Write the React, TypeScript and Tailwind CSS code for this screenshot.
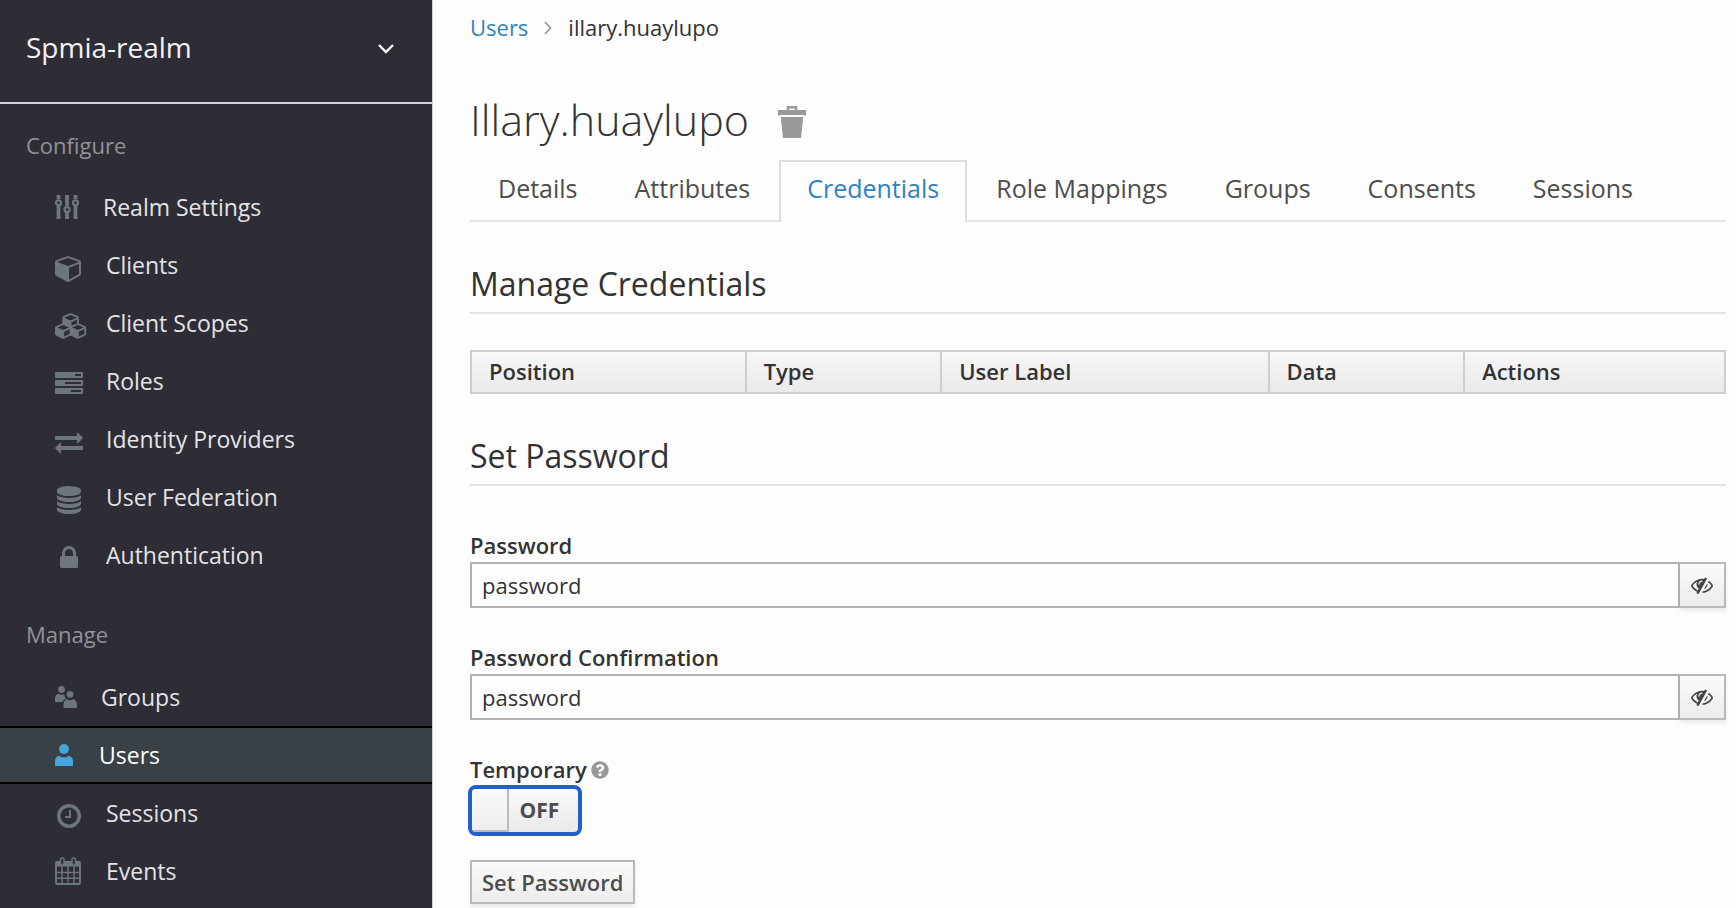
import { useState } from "react";
import type { ReactNode } from "react";
import { FaQuestionCircle } from "react-icons/fa";

const paths = {
  cube: "M896 1629l640-349v-636l-640 233v752zm-64-865l698-254-698-254-698 254zm832-252v768q0 35-18 65t-49 47l-704 384q-28 16-61 16t-61-16l-704-384q-31-17-49-47t-18-65v-768q0-40 23-73t61-47l704-256q22-8 44-8t44 8l704 256q38 14 61 47t23 73z",
  cubes:
    "M640 1632l384-192v-314l-384 164v342zm-64-454l404-173-404-173-404 173zm1088 454l384-192v-314l-384 164v342zm-64-454l404-173-404-173-404 173zm-448-293l384-165v-266l-384 164v267zm-64-379l441-189-441-189-441 189zm1088 518v416q0 36-19 67t-52 47l-448 224q-25 14-57 14t-57-14l-448-224q-4-2-7-4-2 2-7 4l-448 224q-25 14-57 14t-57-14l-448-224q-33-16-52-47t-19-67v-416q0-38 21.5-70t56.5-48l434-186v-400q0-38 21.5-70t56.5-48l448-192q23-10 50-10t50 10l448 192q35 16 56.5 48t21.5 70v400l434 186q36 16 57 48t21 70z",
  tasks:
    "M1024 1408h640v-128h-640v128zm-384-512h1024v-128h-1024v128zm640-512h384v-128h-384v128zm512 832v256q0 26-19 45t-45 19h-1664q-26 0-45-19t-19-45v-256q0-26 19-45t45-19h1664q26 0 45 19t19 45zm0-512v256q0 26-19 45t-45 19h-1664q-26 0-45-19t-19-45v-256q0-26 19-45t45-19h1664q26 0 45 19t19 45zm0-512v256q0 26-19 45t-45 19h-1664q-26 0-45-19t-19-45v-256q0-26 19-45t45-19h1664q26 0 45 19t19 45z",
  exchange:
    "M1792 1184v192q0 13-9.5 22.5t-22.5 9.5h-1376v192q0 13-9.5 22.5t-22.5 9.5q-12 0-24-10l-319-320q-9-9-9-22 0-14 9-23l320-320q9-9 23-9 13 0 22.5 9.5t9.5 22.5v192h1376q13 0 22.5 9.5t9.5 22.5zm0-544q0 14-9 23l-320 320q-9 9-23 9-13 0-22.5-9.5t-9.5-22.5v-192h-1376q-13 0-22.5-9.5t-9.5-22.5v-192q0-13 9.5-22.5t22.5-9.5h1376v-192q0-14 9-23t23-9q12 0 24 10l319 319q9 9 9 23z",
  database:
    "M896 768q237 0 443-43t325-127v170q0 69-103 128t-280 93.5-385 34.5-385-34.5-280-93.5-103-128v-170q119 84 325 127t443 43zm0 768q237 0 443-43t325-127v170q0 69-103 128t-280 93.5-385 34.5-385-34.5-280-93.5-103-128v-170q119 84 325 127t443 43zm0-384q237 0 443-43t325-127v170q0 69-103 128t-280 93.5-385 34.5-385-34.5-280-93.5-103-128v-170q119 84 325 127t443 43zm0-1152q208 0 385 34.5t280 93.5 103 128v128q0 69-103 128t-280 93.5-385 34.5-385-34.5-280-93.5-103-128v-128q0-69 103-128t280-93.5 385-34.5z",
  lock: "M640 768h512v-192q0-106-75-181t-181-75-181 75-75 181v192zm832 96v576q0 40-28 68t-68 28h-960q-40 0-68-28t-28-68v-576q0-40 28-68t68-28h32v-192q0-184 132-316t316-132 316 132 132 316v192h32q40 0 68 28t28 68z",
  clock:
    "M1024 544v448q0 14-9 23t-23 9h-320q-14 0-23-9t-9-23v-64q0-14 9-23t23-9h224v-352q0-14 9-23t23-9h64q14 0 23 9t9 23zm416 352q0-148-73-273t-198-198-273-73-273 73-198 198-73 273 73 273 198 198 273 73 273-73 198-198 73-273zm224 0q0 209-103 385.5t-279.5 279.5-385.5 103-385.5-103-279.5-279.5-103-385.5 103-385.5 279.5-279.5 385.5-103 385.5 103 279.5 279.5 103 385.5z",
  eyeSlash:
    "M555 1335l78-141q-87-63-136-159t-49-203q0-121 61-225-229 117-381 353 167 258 427 375zm389-759q0-20-14-34t-34-14q-125 0-214.5 89.5t-89.5 214.5q0 20 14 34t34 14 34-14 14-34q0-86 61-147t147-61q20 0 34-14t14-34zm363-191q0 7-1 9-106 189-316 567t-315 566l-49 89q-10 16-28 16-12 0-134-70-16-10-16-28 0-12 44-87-143-65-263.5-173t-208.5-245q-20-31-20-69t20-69q153-235 380-371t496-136q89 0 180 17l54-97q10-16 28-16 5 0 18 6t31 15.5 33 18.5 31.5 18.5 19.5 11.5q16 10 16 27zm37 447q0 139-79 253.5t-209 164.5l280-502q8 45 8 84zm448 128q0 35-20 69-39 64-109 145-150 172-347.5 267t-419.5 95l74-132q212-18 392.5-137t301.5-307q-115-179-282-294l63-112q95 64 182.5 153t144.5 184q20 34 20 69z",
};

function Glyph({ d, box = "0 0 1792 1792", className }: { d: string; box?: string; className: string }) {
  return (
    <svg viewBox={box} fill="currentColor" aria-hidden="true" className={className}>
      <path d={d} />
    </svg>
  );
}

function SlidersIcon() {
  return (
    <svg viewBox="0 0 24 24" fill="none" stroke="currentColor" aria-hidden="true" className="size-6">
      <g strokeWidth="3.8">
        <path d="M3.5 0v4M3.5 11v13M12 0v11M12 18v6M20.5 0v4M20.5 11v13" />
      </g>
      <g strokeWidth="2.2">
        <circle cx="3.5" cy="7.8" r="2.5" />
        <circle cx="12" cy="14.6" r="2.5" />
        <circle cx="20.5" cy="7.8" r="2.5" />
      </g>
    </svg>
  );
}

function CalendarIcon() {
  return (
    <svg viewBox="0 0 26 28" fill="none" stroke="currentColor" aria-hidden="true" className="h-7 w-[26px]">
      <rect x="1" y="5" width="24" height="22" rx="1" strokeWidth="2" />
      <path d="M1 7h24" strokeWidth="5" />
      <path d="M1 15.5h24M1 21.2h24M7 9v18M13 9v18M19 9v18" strokeWidth="1.4" />
      <rect x="5.5" y="1" width="3.5" height="7" rx="1.2" strokeWidth="1.4" fill="#2e2d35" />
      <rect x="17" y="1" width="3.5" height="7" rx="1.2" strokeWidth="1.4" fill="#2e2d35" />
    </svg>
  );
}

function UserIcon() {
  return (
    <svg viewBox="0 0 18 22" fill="currentColor" aria-hidden="true" className="h-[22px] w-[18px]">
      <circle cx="9" cy="5" r="5" />
      <path d="M0 22v-4.500C0 14.500 1.500 12.200 4 11.800c3 2 7 2 10 0 2.500.4 4 2.700 4 5.700V22z" />
    </svg>
  );
}

function GroupIcon() {
  return (
    <svg viewBox="0 0 22 22" fill="currentColor" aria-hidden="true" className="size-[22px]">
      <circle cx="6.500" cy="3.500" r="3.400" />
      <circle cx="15" cy="8.300" r="3.400" />
      <path d="M0 16v-3.200C0 10 1.500 8 3.500 7.800c1.800 1.200 3.800 1.300 5.600.4.400 2.300 1 3.600 2.200 4.600C9 13.500 8 14.500 7.400 16z" />
      <path d="M8.500 22v-3c0-3.500 1.500-5.500 3.400-5.800 2 1.400 4.300 1.400 6.200 0 2.200.3 3.900 2.300 3.900 5.800v3z" />
    </svg>
  );
}

function TrashIcon() {
  return (
    <svg viewBox="0 0 28 32" aria-hidden="true" className="h-8 w-7">
      <path d="M10 5V1.200h8V5" fill="none" stroke="#999" strokeWidth="2.400" />
      <path d="M0 4h28v5.500h-2V9H2v.5H0z" fill="#999" />
      <path d="M2.800 11h22.400L23 32H5z" fill="#999" />
    </svg>
  );
}

type Item = { label: string; icon: ReactNode; gap: string; active?: boolean };

const configure: Item[] = [
  { label: "Realm Settings", icon: <SlidersIcon />, gap: "gap-6" },
  { label: "Clients", icon: <Glyph d={paths.cube} box="0 0 1664 1792" className="mt-1.5 h-7 w-[26px]" />, gap: "gap-[25px]" },
  { label: "Client Scopes", icon: <Glyph d={paths.cubes} box="0 0 2304 1792" className="mt-1.5 -mr-[5px] h-7 w-[33px]" />, gap: "gap-[23px]" },
  { label: "Roles", icon: <Glyph d={paths.tasks} className="mt-1.5 size-7" />, gap: "gap-[23px]" },
  { label: "Identity Providers", icon: <Glyph d={paths.exchange} className="mt-1.5 size-7" />, gap: "gap-[23px]" },
  { label: "User Federation", icon: <Glyph d={paths.database} className="mt-1.5 size-7" />, gap: "gap-[23px]" },
  { label: "Authentication", icon: <Glyph d={paths.lock} className="mt-1.5 size-7" />, gap: "gap-[23px]" },
];

const manage: Item[] = [
  { label: "Groups", icon: <GroupIcon />, gap: "gap-6" },
  { label: "Users", icon: <UserIcon />, gap: "gap-[26px]", active: true },
  { label: "Sessions", icon: <Glyph d={paths.clock} className="mt-1.5 size-7" />, gap: "gap-[23px]" },
  { label: "Events", icon: <CalendarIcon />, gap: "gap-[25px]" },
];

function NavList({ items }: { items: Item[] }) {
  return (
    <ul>
      {items.map((item) => (
        <li key={item.label}>
          <a
            href="#"
            aria-current={item.active ? "page" : undefined}
            className={`flex h-[58px] items-center border-y-2 pl-[55px] text-[23px] leading-8 ${item.gap} ${
              item.active ? "border-black bg-[#3a4146] text-white" : "border-transparent text-[#e3e3e7]"
            }`}
          >
            <span className={item.active ? "text-[#46a5da]" : "text-[#6d767b]"}>{item.icon}</span>
            {item.label}
          </a>
        </li>
      ))}
    </ul>
  );
}

const tabs = ["Details", "Attributes", "Credentials", "Role Mappings", "Groups", "Consents", "Sessions"];

const columns = [
  { name: "Position", width: "w-[21.9%]" },
  { name: "Type", width: "w-[15.6%]" },
  { name: "User Label", width: "w-[26.1%]" },
  { name: "Data", width: "w-[15.6%]" },
  { name: "Actions", width: "w-[20.8%]" },
];

function PasswordField({ id, label }: { id: string; label: string }) {
  const [value, setValue] = useState("password");
  const [visible, setVisible] = useState(true);
  return (
    <div>
      <label htmlFor={id} className="block pb-0.5 text-[22px] leading-[30px] font-semibold">
        {label}
      </label>
      <div className="flex h-[46px]">
        <input
          id={id}
          type={visible ? "text" : "password"}
          value={value}
          onChange={(e) => setValue(e.target.value)}
          className="min-w-0 flex-1 border-2 border-[#b3b3b3] bg-[#fefefe] px-2.5 text-[22px]"
        />
        <button
          type="button"
          aria-label="Toggle password visibility"
          onClick={() => setVisible(!visible)}
          className="flex w-[46px] items-center justify-center border-2 border-l-0 border-[#b9b9b9] bg-linear-to-b from-[#fafafa] to-[#ececec] text-[#444] shadow-[0_3px_4px_rgba(0,0,0,0.08)]"
        >
          <Glyph d={paths.eyeSlash} className="size-[22px]" />
        </button>
      </div>
    </div>
  );
}

function SectionTitle({ children }: { children: ReactNode }) {
  return <h2 className="border-b-2 border-[#e2e2e2] pb-1.5 text-[32px] leading-[44px]">{children}</h2>;
}

export default function App() {
  const [on, setOn] = useState(false);
  return (
    <div className="flex min-h-screen bg-[#fdfdfd] font-['Open_Sans','Noto_Sans',sans-serif] text-[#333]">
      <nav className="w-[433px] shrink-0 border-r border-[#d5d5d8] bg-[#2e2d35]">
        <button
          type="button"
          className="flex h-[104px] w-full items-center justify-between border-b-2 border-[#d3d3da] pr-[38px] pb-2 pl-[26px] text-[28px] text-[#f2f2f5]"
        >
          Spmia-realm
          <svg viewBox="0 0 16 10" fill="none" stroke="#fff" strokeWidth="2.400" aria-hidden="true" className="mt-1 h-[10px] w-4">
            <path d="M1 1l7 7 7-7" />
          </svg>
        </button>
        <h2 className="pt-[27px] pb-[19px] pl-[26px] text-[22px] leading-7 text-[#929298]">Configure</h2>
        <NavList items={configure} />
        <h2 className="pt-9 pb-5 pl-[26px] text-[22px] leading-7 text-[#929298]">Manage</h2>
        <NavList items={manage} />
      </nav>

      <main className="min-w-0 flex-1 pr-[10px] pl-[37px]">
        <nav aria-label="Breadcrumb" className="flex items-center pt-[11px] text-[22px] leading-8">
          <a href="#" className="text-[#2f83c0]">
            Users
          </a>
          <svg viewBox="0 0 8 14" fill="none" stroke="#999" strokeWidth="1.800" aria-hidden="true" className="mx-4 mt-0.5 h-[14px] w-2">
            <path d="M1 1l5.500 6L1 13" />
          </svg>
          <span>illary.huaylupo</span>
        </nav>

        <div className="flex items-center gap-[29px] pt-[49px]">
          <h1 className="pb-1 text-[43px] leading-[56px] font-light">Illary.huaylupo</h1>
          <button type="button" aria-label="Delete user">
            <TrashIcon />
          </button>
        </div>

        <div className="mt-2 flex gap-px border-b-2 border-[#e6e6e6]">
          {tabs.map((tab) => (
            <a
              key={tab}
              href="#"
              className={`-mb-0.5 h-[62px] border-2 border-b-0 px-[26px] pt-2.5 text-[25px] leading-8 ${
                tab === "Credentials"
                  ? "border-[#dedede] bg-[#fdfdfd] text-[#2f83c0]"
                  : "border-transparent text-[#4d4d4d]"
              }`}
            >
              {tab}
            </a>
          ))}
        </div>

        <div className="pt-10">
          <SectionTitle>Manage Credentials</SectionTitle>
          <table className="mt-9 w-full table-fixed border-2 border-[#cecece] bg-linear-to-b from-[#f8f8f8] to-[#e9e9e9]">
            <thead>
              <tr>
                {columns.map((c) => (
                  <th
                    key={c.name}
                    className={`h-[42px] border-l-2 border-[#cecece] px-[17px] pb-0.5 text-left text-[22px] leading-8 font-semibold ${c.width}`}
                  >
                    {c.name}
                  </th>
                ))}
              </tr>
            </thead>
          </table>
        </div>

        <div className="pt-10">
          <SectionTitle>Set Password</SectionTitle>
          <form className="pt-11" onSubmit={(e) => e.preventDefault()}>
            <div className="flex flex-col gap-[34px]">
              <PasswordField id="password" label="Password" />
              <PasswordField id="confirmation" label="Password Confirmation" />
              <div>
                <div className="flex items-center gap-1">
                  <label htmlFor="temporary" className="pb-0.5 text-[22px] leading-[30px] font-semibold">
                    Temporary
                  </label>
                  <FaQuestionCircle className="size-[18px] text-[#999]" />
                </div>
                <button
                  id="temporary"
                  type="button"
                  role="switch"
                  aria-checked={on}
                  onClick={() => setOn(!on)}
                  className="-mt-px -ml-0.5 flex h-[51px] w-[114px] overflow-hidden rounded-lg border-4 border-[#2160cc] bg-linear-to-b from-[#fafafa] to-[#e9e9e9] text-[21px] leading-[42px] font-bold text-[#4d4d4d]"
                >
                  <span className="h-full w-[37px] border-r-2 border-b-2 border-[#bbb] bg-linear-to-b from-[#fafafa] to-[#ededed]" />
                  <span className="flex-1 pr-2">{on ? "ON" : "OFF"}</span>
                </button>
              </div>
            </div>
            <button
              type="submit"
              className="mt-6 h-11 border-2 border-[#b9b9b9] bg-linear-to-b from-[#fafafa] to-[#ececec] px-2.5 text-[22px] font-semibold text-[#4d4d4d] shadow-[0_3px_4px_rgba(0,0,0,0.08)]"
            >
              Set Password
            </button>
          </form>
        </div>
      </main>
    </div>
  );
}
